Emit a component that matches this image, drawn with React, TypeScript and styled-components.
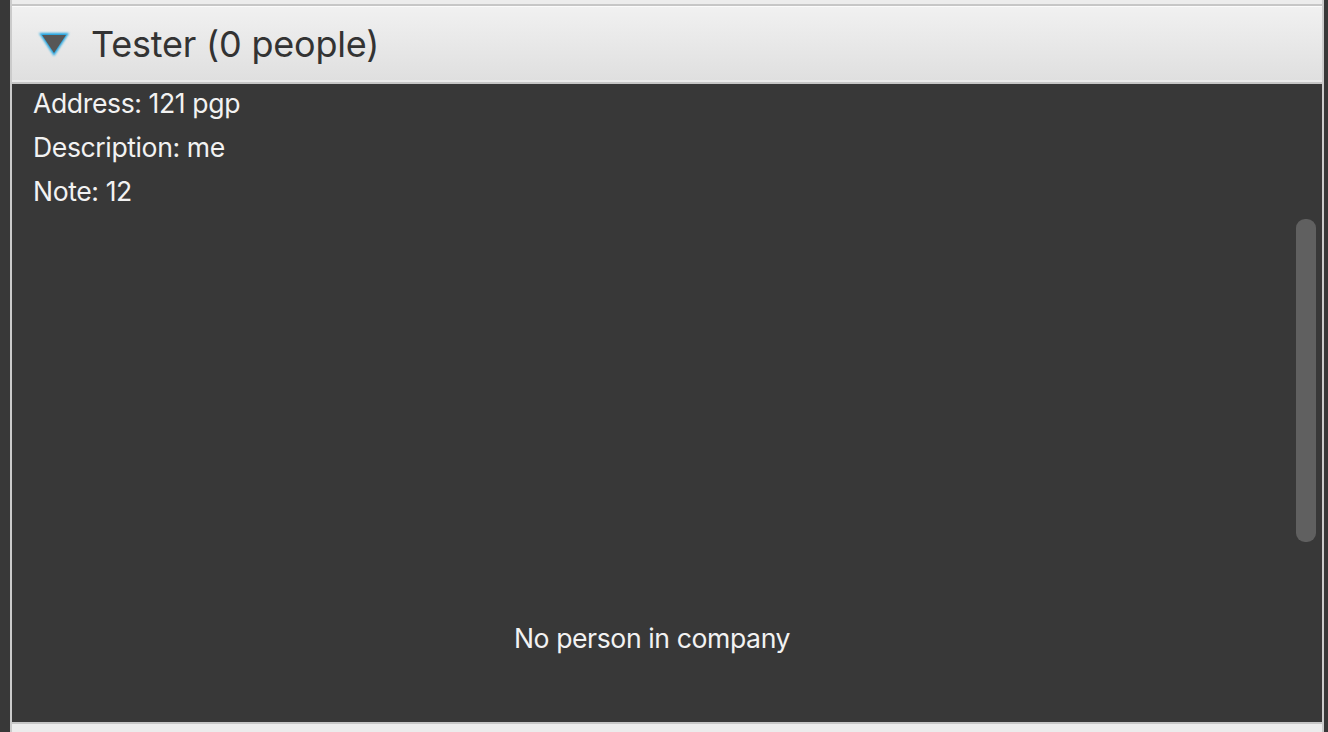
import styled, { createGlobalStyle } from 'styled-components';

const GlobalStyle = createGlobalStyle`
  html, body {
    margin: 0;
    padding: 0;
    background: #383838;
    overflow: hidden;
  }
`;

const FONT = `Inter, "Open Sans", "Noto Sans", sans-serif`;

const Page = styled.div`
  width: 1328px;
  height: 732px;
  padding-left: 10px;
  box-sizing: border-box;
  background: #383838;
  overflow: hidden;
`;

const Pane = styled.div`
  width: 1314px;
  height: 100%;
  display: flex;
  flex-direction: column;
  border-left: 2px solid #cbcbcb;
  border-right: 2px solid #cbcbcb;
  box-sizing: border-box;
`;

const PrevPaneEnd = styled.div`
  height: 4px;
  flex-shrink: 0;
  background: #ececec;
  border-bottom: 2px solid #c6c6c6;
`;

const Header = styled.div<{ $height: number }>`
  height: ${(p) => p.$height}px;
  flex-shrink: 0;
  display: flex;
  align-items: center;
  gap: 19px;
  padding-left: 24px;
  box-sizing: border-box;
  background: linear-gradient(#f1f1f1, #dfdfdf);
  box-shadow: inset 0 1px 0 #fbfbfb, inset 0 -2px 0 #ebebeb;
  border-bottom: 2px solid #c6c6c6;
`;

const NextHeader = styled.div`
  flex: 1;
  background: #ececec;
  box-shadow: inset 0 2px 0 #c6c6c6;
`;

const Title = styled.span`
  font-family: ${FONT};
  font-size: 36px;
  color: #333333;
  letter-spacing: -0.2px;
`;

const Content = styled.div`
  position: relative;
  height: 638px;
  flex-shrink: 0;
  display: flex;
  flex-direction: column;
  gap: 6px;
  padding-left: 21px;
  box-sizing: border-box;
  background: #383838;
`;

const Line = styled.div`
  font-family: ${FONT};
  font-size: 26.6px;
  line-height: 38px;
  color: #f2f2f2;
  letter-spacing: -0.4px;
`;

const Placeholder = styled(Line)`
  margin-top: auto;
  margin-bottom: 65px;
  margin-left: -21px;
  margin-right: 30px;
  text-align: center;
`;

const ScrollThumb = styled.div`
  position: absolute;
  right: 6px;
  top: 135px;
  width: 20px;
  height: 323px;
  border-radius: 9px;
  background: #606060;
`;

function Arrow() {
  return (
    <svg width="36" height="30" viewBox="0 0 36 30">
      <defs>
        <filter id="glow" x="-30%" y="-30%" width="160%" height="160%">
          <feGaussianBlur stdDeviation="1.2" />
        </filter>
      </defs>
      <polygon points="3,4 33,4 18,27" fill="#1aa3e0" filter="url(#glow)" />
      <polygon points="6,6 30,6 18,24" fill="#575757" />
    </svg>
  );
}

export default function App() {
  return (
    <Page>
      <GlobalStyle />
      <Pane>
        <PrevPaneEnd />
        <Header $height={78}>
          <Arrow />
          <Title>Tester (0 people)</Title>
        </Header>
        <Content>
          <Line>Address: 121 pgp</Line>
          <Line>Description: me</Line>
          <Line>Note: 12</Line>
          <Placeholder>No person in company</Placeholder>
          <ScrollThumb />
        </Content>
        <NextHeader />
      </Pane>
    </Page>
  );
}
